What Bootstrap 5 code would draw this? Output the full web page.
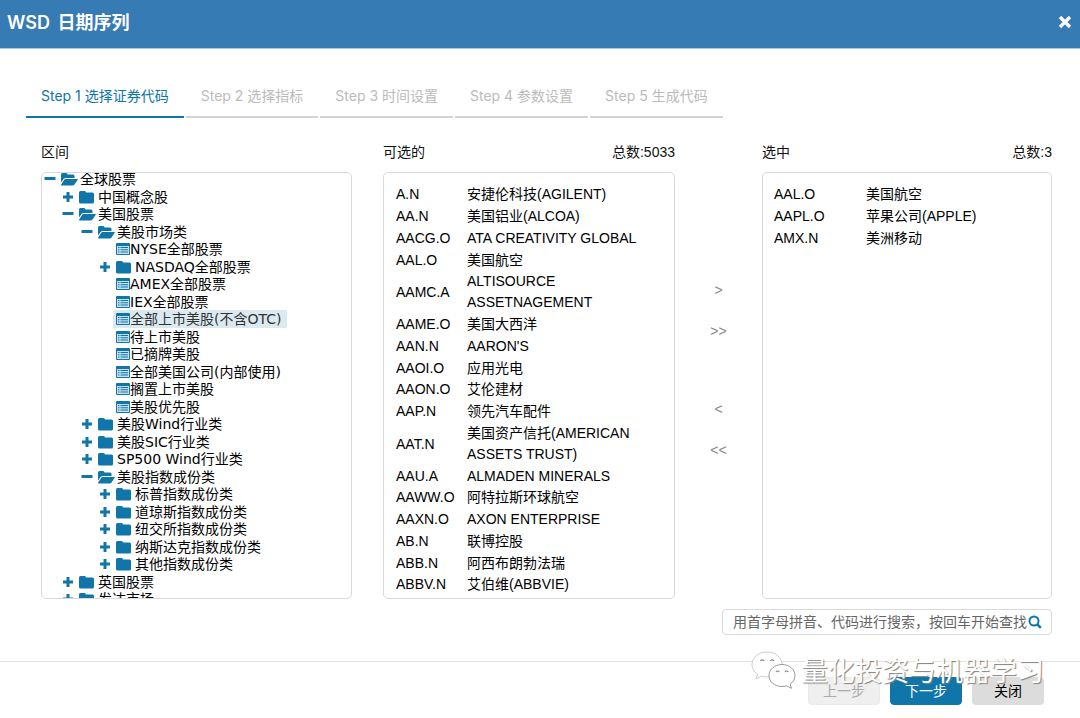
<!DOCTYPE html>
<html lang="zh-CN">
<head>
<meta charset="utf-8">
<meta name="viewport" content="width=device-width, initial-scale=1">
<title>WSD 日期序列</title>
<link href="https://cdn.jsdelivr.net/npm/bootstrap@5.3.0/dist/css/bootstrap.min.css" rel="stylesheet">
<style>
:root { --wind: #1075a8; --line: #d9d9d9; }
body { font-family: "Liberation Sans", "Noto Sans CJK SC", sans-serif; font-size: 14px; line-height: 21px; color: #111; background: #fff; }
.titlebar { background: #377bb5; color: #fff; height: 50px; padding: 0 8px 2px 7px; border-bottom: 1px solid #a9c8e2; }
.titlebar h1 { font-family: Inter, "Noto Sans CJK SC", sans-serif; font-size: 18px; font-weight: 600; line-height: 24px; }
.titlebar h1 span { margin-left: 3px; }
.steps { gap: 2px; padding: 36px 26px 0; font-family: Inter, "Noto Sans CJK SC", sans-serif; }
.steps .nav-link { padding: 0 15px 10px; color: #bbb; border-bottom: 2px solid #d3d3d3; }
.steps .nav-link.active { color: var(--wind); border-color: var(--wind); }
.picker { display: grid; grid-template-columns: 311fr 31px 292fr 87px 290fr; grid-template-rows: 100%; padding: 24px 28px 0 41px; }
.caption-row { padding: 0 0 9px; }
.panel { border: 1px solid var(--line); border-radius: 5px; overflow: auto; scrollbar-width: none; }
.panel::-webkit-scrollbar { display: none; }
.tree { font-family: "DejaVu Sans", "Noto Sans CJK SC", sans-serif; font-size: 14px; padding-left: 2px; color: #000; }
.tree li { display: flex; align-items: center; height: 18px; line-height: 18px; white-space: nowrap; }
.tree li:nth-child(2n) { height: 17px; }
.tree li:first-child { margin-top: -3px; }
.tree svg { flex: none; fill: var(--wind); }
.tree .toggle { width: 12px; height: 12px; margin-right: 4px; }
.tree .folder { width: 18px; height: 14px; margin-right: 2px; }
.tree .sheet { width: 14px; height: 12px; margin-left: 3px; }
.lv1 { padding-left: 18px; }
.lv2 { padding-left: 37px; }
.lv3 { padding-left: 55px; }
.lv4 { padding-left: 69px; }
.picked { background: #dbe9f0; padding-right: 6px; color: #333; }
.codes { width: 100%; margin: 11px 0 0; color: #000; }
.codes td { padding: 0 0 1px; vertical-align: middle; }
.codes tr:nth-child(4n) td { padding-bottom: 0; }
.codes td:first-child { width: 83px; padding-left: 12px; }
.codes td:last-child { padding-right: 30px; }
.chosen td:first-child { width: 103px; padding-left: 11px; }
.movers { gap: 57px; }
.movers button { border: 0; background: none; padding: 0; color: #888; font-size: 14px; line-height: 21px; }
.finder { width: 330px; height: 26px; border: 1px solid var(--line); border-radius: 4px; margin: 10px 28px 26px auto; padding: 0 9px 0 10px; }
.finder input { border: 0; outline: 0; padding: 0; color: #555; min-width: 0; }
.finder input::placeholder { color: #666; opacity: 1; }
.finder button { border: 0; background: none; padding: 0; line-height: 0; }
.actions { border-top: 1px solid #e3e3e3; padding: 15px 36px 13px; gap: 10px; }
.actions .btn { width: 72px; height: 28px; padding: 0; font-size: 14px; line-height: 26px; border-radius: 4px; background: #dcdcdc; border-color: #dcdcdc; color: #000; }
.actions .btn:disabled { background: #efefef; border-color: #eaeaea; color: #aaa; opacity: 1; }
.actions .btn.go { background: var(--wind); border-color: var(--wind); color: #fff; }
.stamp { right: 36px; bottom: 29px; pointer-events: none; gap: 4px; color: #fff; font-family: "Noto Sans CJK SC", sans-serif; font-size: 27px; line-height: 36px; text-shadow: 1px 1px 1px #808080; }
</style>
</head>
<body>
<svg class="d-none">
  <symbol id="plus" viewBox="0 0 12 12"><path d="M4.500 1h3v3.500H11v3H7.500V11h-3V7.500H1v-3h3.500z"/></symbol>
  <symbol id="minus" viewBox="0 0 12 12"><rect x="0.500" y="4" width="11" height="3" rx=".5"/></symbol>
  <symbol id="closed" viewBox="0 0 18 14"><path d="M1 2.500Q1 1 2.500 1H6.500Q8 1 8 2.500H14.500Q16 2.500 16 4V12Q16 13.500 14.500 13.500H2.500Q1 13.500 1 12z"/></symbol>
  <symbol id="open" viewBox="0 0 18 14"><path d="M1 10.500V2.500Q1 1 2.500 1H6Q7.500 1 7.500 2.500H13Q14.500 2.500 14.500 4V6H6Q4.500 6 3.500 7z"/><path d="M5.500 7H17.500Q18.200 7 17.700 7.800L14.500 12.500Q13.800 13.500 12.500 13.500H1.500Q.7 13.500 1.200 12.500L4 8Q4.600 7 5.500 7z"/></symbol>
  <symbol id="sheet" viewBox="0 0 14 12"><rect x="0" y="0" width="14" height="12" rx="1"/><path fill="#c5e1ef" d="M1 3h12v8H1z"/><path d="M2 4h1.500v1H2zM4.500 4H12v1H4.500zM2 6.200h1.500v1H2zM4.500 6.200H12v1H4.500zM2 8.500h1.500v1H2zM4.500 8.500H12v1H4.500z"/></symbol>
</svg>
<div class="d-flex flex-column vh-100 position-relative overflow-hidden">
  <header class="titlebar d-flex align-items-center justify-content-between">
    <h1 class="m-0">WSD <span>日期序列</span></h1>
    <button type="button" class="border-0 bg-transparent p-0 pb-1 lh-1" aria-label="关闭窗口"><svg width="14" height="14" viewBox="0 0 14 14" stroke="#fff" stroke-width="3.200"><path d="M2 2l10 10M12 2L2 12"/></svg></button>
  </header>

  <nav class="steps nav">
    <a class="nav-link active" href="#s1">Step 1 选择证券代码</a>
    <a class="nav-link" href="#s2">Step 2 选择指标</a>
    <a class="nav-link" href="#s3">Step 3 时间设置</a>
    <a class="nav-link" href="#s4">Step 4 参数设置</a>
    <a class="nav-link" href="#s5">Step 5 生成代码</a>
  </nav>

  <main class="picker flex-grow-1 overflow-hidden">
    <section class="d-flex flex-column h-100 overflow-hidden">
      <div class="caption-row">区间</div>
      <div class="panel flex-grow-1">
        <ul class="tree list-unstyled m-0">
          <li><svg class="toggle"><use href="#minus"/></svg><svg class="folder"><use href="#open"/></svg>全球股票</li>
          <li class="lv1"><svg class="toggle"><use href="#plus"/></svg><svg class="folder"><use href="#closed"/></svg>中国概念股</li>
          <li class="lv1"><svg class="toggle"><use href="#minus"/></svg><svg class="folder"><use href="#open"/></svg>美国股票</li>
          <li class="lv2"><svg class="toggle"><use href="#minus"/></svg><svg class="folder"><use href="#open"/></svg>美股市场类</li>
          <li class="lv4"><svg class="sheet"><use href="#sheet"/></svg>NYSE全部股票</li>
          <li class="lv3"><svg class="toggle"><use href="#plus"/></svg><svg class="folder"><use href="#closed"/></svg>NASDAQ全部股票</li>
          <li class="lv4"><svg class="sheet"><use href="#sheet"/></svg>AMEX全部股票</li>
          <li class="lv4"><svg class="sheet"><use href="#sheet"/></svg>IEX全部股票</li>
          <li class="lv4"><span class="picked d-flex align-items-center"><svg class="sheet"><use href="#sheet"/></svg>全部上市美股(不含OTC)</span></li>
          <li class="lv4"><svg class="sheet"><use href="#sheet"/></svg>待上市美股</li>
          <li class="lv4"><svg class="sheet"><use href="#sheet"/></svg>已摘牌美股</li>
          <li class="lv4"><svg class="sheet"><use href="#sheet"/></svg>全部美国公司(内部使用)</li>
          <li class="lv4"><svg class="sheet"><use href="#sheet"/></svg>搁置上市美股</li>
          <li class="lv4"><svg class="sheet"><use href="#sheet"/></svg>美股优先股</li>
          <li class="lv2"><svg class="toggle"><use href="#plus"/></svg><svg class="folder"><use href="#closed"/></svg>美股Wind行业类</li>
          <li class="lv2"><svg class="toggle"><use href="#plus"/></svg><svg class="folder"><use href="#closed"/></svg>美股SIC行业类</li>
          <li class="lv2"><svg class="toggle"><use href="#plus"/></svg><svg class="folder"><use href="#closed"/></svg>SP500 Wind行业类</li>
          <li class="lv2"><svg class="toggle"><use href="#minus"/></svg><svg class="folder"><use href="#open"/></svg>美股指数成份类</li>
          <li class="lv3"><svg class="toggle"><use href="#plus"/></svg><svg class="folder"><use href="#closed"/></svg>标普指数成份类</li>
          <li class="lv3"><svg class="toggle"><use href="#plus"/></svg><svg class="folder"><use href="#closed"/></svg>道琼斯指数成份类</li>
          <li class="lv3"><svg class="toggle"><use href="#plus"/></svg><svg class="folder"><use href="#closed"/></svg>纽交所指数成份类</li>
          <li class="lv3"><svg class="toggle"><use href="#plus"/></svg><svg class="folder"><use href="#closed"/></svg>纳斯达克指数成份类</li>
          <li class="lv3"><svg class="toggle"><use href="#plus"/></svg><svg class="folder"><use href="#closed"/></svg>其他指数成份类</li>
          <li class="lv1"><svg class="toggle"><use href="#plus"/></svg><svg class="folder"><use href="#closed"/></svg>英国股票</li>
          <li class="lv1"><svg class="toggle"><use href="#plus"/></svg><svg class="folder"><use href="#closed"/></svg>发达市场</li>
        </ul>
      </div>
    </section>
    <div></div>
    <section class="d-flex flex-column h-100 overflow-hidden">
      <div class="caption-row d-flex justify-content-between"><span>可选的</span><span>总数:5033</span></div>
      <div class="panel flex-grow-1">
        <table class="codes">
          <tbody>
            <tr><td>A.N</td><td>安捷伦科技(AGILENT)</td></tr>
            <tr><td>AA.N</td><td>美国铝业(ALCOA)</td></tr>
            <tr><td>AACG.O</td><td>ATA CREATIVITY GLOBAL</td></tr>
            <tr><td>AAL.O</td><td>美国航空</td></tr>
            <tr><td>AAMC.A</td><td>ALTISOURCE ASSETNAGEMENT</td></tr>
            <tr><td>AAME.O</td><td>美国大西洋</td></tr>
            <tr><td>AAN.N</td><td>AARON'S</td></tr>
            <tr><td>AAOI.O</td><td>应用光电</td></tr>
            <tr><td>AAON.O</td><td>艾伦建材</td></tr>
            <tr><td>AAP.N</td><td>领先汽车配件</td></tr>
            <tr><td>AAT.N</td><td>美国资产信托(AMERICAN ASSETS TRUST)</td></tr>
            <tr><td>AAU.A</td><td>ALMADEN MINERALS</td></tr>
            <tr><td>AAWW.O</td><td>阿特拉斯环球航空</td></tr>
            <tr><td>AAXN.O</td><td>AXON ENTERPRISE</td></tr>
            <tr><td>AB.N</td><td>联博控股</td></tr>
            <tr><td>ABB.N</td><td>阿西布朗勃法瑞</td></tr>
            <tr><td>ABBV.N</td><td>艾伯维(ABBVIE)</td></tr>
          </tbody>
        </table>
      </div>
    </section>
    <div class="movers d-flex flex-column align-items-center justify-content-center">
      <div class="d-flex flex-column gap-3">
        <button type="button" class="mb-1">&gt;</button>
        <button type="button">&gt;&gt;</button>
      </div>
      <div class="d-flex flex-column gap-3">
        <button type="button" class="mb-1">&lt;</button>
        <button type="button">&lt;&lt;</button>
      </div>
    </div>
    <section class="d-flex flex-column h-100 overflow-hidden">
      <div class="caption-row d-flex justify-content-between"><span>选中</span><span>总数:3</span></div>
      <div class="panel flex-grow-1">
        <table class="codes chosen">
          <tbody>
            <tr><td>AAL.O</td><td>美国航空</td></tr>
            <tr><td>AAPL.O</td><td>苹果公司(APPLE)</td></tr>
            <tr><td>AMX.N</td><td>美洲移动</td></tr>
          </tbody>
        </table>
      </div>
    </section>
  </main>

  <form class="finder d-flex align-items-center flex-shrink-0">
    <input type="text" class="flex-grow-1" aria-label="搜索证券" placeholder="用首字母拼音、代码进行搜索，按回车开始查找">
    <button type="button" aria-label="搜索"><svg width="14" height="14" viewBox="0 0 14 14" fill="none" stroke="#1075a8" stroke-width="2"><circle cx="6" cy="6" r="4.500"/><path d="M9.300 9.300L12.800 12.800" stroke-width="2.600"/></svg></button>
  </form>

  <footer class="actions d-flex justify-content-end flex-shrink-0">
    <button type="button" class="btn" disabled>上一步</button>
    <button type="button" class="btn go">下一步</button>
    <button type="button" class="btn">关闭</button>
  </footer>

  <div class="stamp position-absolute d-flex align-items-center">
    <svg width="46" height="38" viewBox="0 0 46 38" fill="#fff" stroke="#999" stroke-width="1">
      <path stroke="#ccc" d="M16 1C7.500 1 1 6.500 1 13.500c0 4 2 7.400 5.500 9.700L5 28l5.500-2.900c1.700.5 3.500.8 5.500.8 8.500 0 15-5.500 15-12.400S24.500 1 16 1z"/>
      <path d="M31 13.500c-7.500 0-13 5-13 11s5.500 11 13 11c1.600 0 3-.2 4.500-.7l5 2.500-1.300-4.300c3-2 4.800-5 4.800-8.500 0-6-5.500-11-13-11z"/>
      <g fill="none" stroke="#888" stroke-width="1.200"><path d="M9.500 10a2 2 0 0 1 3.500 0M19.500 10a2 2 0 0 1 3.500 0M25 21a1.800 1.800 0 0 1 3.200 0M34 21a1.800 1.800 0 0 1 3.200 0"/></g>
    </svg>
    <span>量化投资与机器学习</span>
  </div>
</div>
<script src="https://cdn.jsdelivr.net/npm/bootstrap@5.3.0/dist/js/bootstrap.bundle.min.js"></script>
</body>
</html>
